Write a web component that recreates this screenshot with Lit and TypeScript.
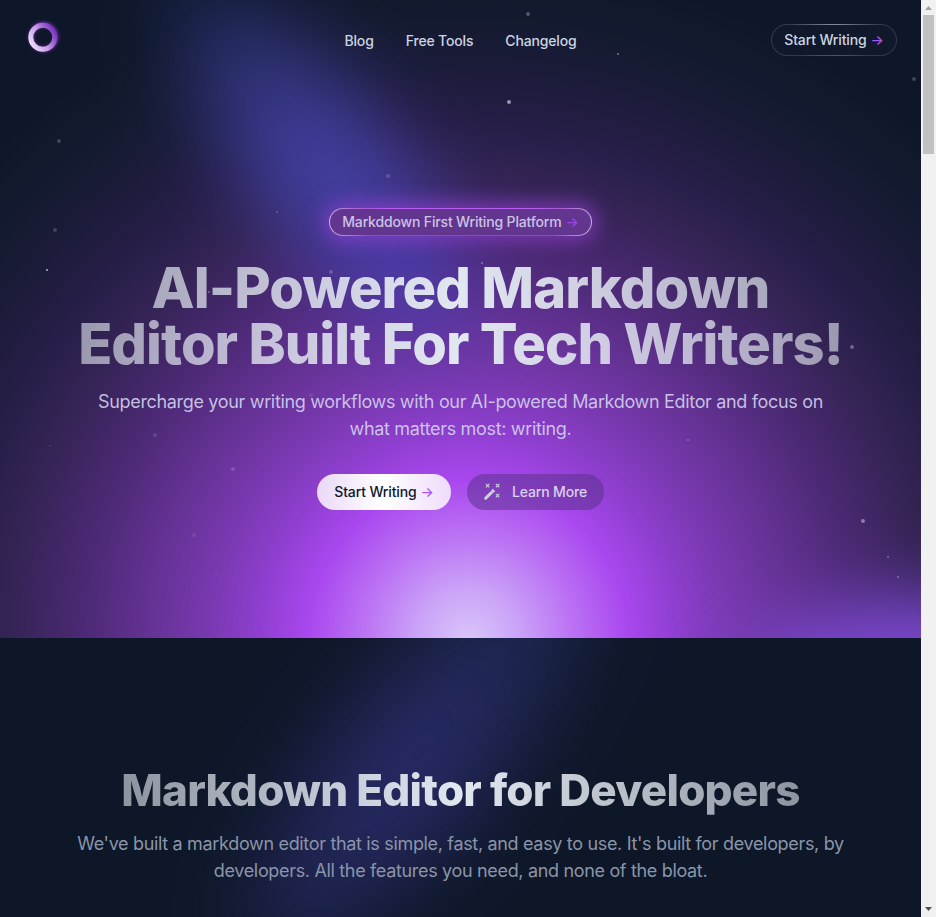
import { LitElement, html, css } from "lit";
import { customElement } from "lit/decorators.js";
import { styleMap } from "lit/directives/style-map.js";

type Star = [x: number, y: number, size: number, alpha: number];

const STARS: Star[] = [
  [528, 13.5, 4, 0.3], [617.5, 53.5, 2, 0.45], [508.5, 102, 4, 0.6], [913.5, 79, 4, 0.22],
  [59, 140.5, 4, 0.22], [388, 176, 4, 0.2], [54.5, 230, 4, 0.2], [47, 270, 2, 0.75],
  [277, 211.5, 2, 0.25], [330.5, 272, 4, 0.22], [482, 263, 2, 0.4], [209, 292, 2, 0.4],
  [310, 310, 2, 0.15], [852, 346.5, 4, 0.35], [155, 434.5, 4, 0.15], [49.5, 446, 2, 0.12],
  [233, 469, 4, 0.18], [688, 440, 2, 0.3], [194, 534.5, 4, 0.12], [215.5, 575, 2, 0.1],
  [862.5, 520.5, 4, 0.45], [887.5, 557, 2, 0.35], [898, 577, 2, 0.35], [311, 395, 4, 0.1],
];

@customElement("app-root")
export class AppRoot extends LitElement {
  static styles = css`
    :host {
      display: flex;
      width: 936px;
      height: 917px;
      overflow: hidden;
      background: #0e1729;
      font-family: Inter, sans-serif;
    }
    .page { width: 921px; height: 917px; overflow: hidden; position: relative; }
    .hero {
      position: relative;
      isolation: isolate;
      height: 638px;
      overflow: hidden;
      text-align: center;
    }
    .sky { position: absolute; inset: 0; z-index: -1; overflow: hidden; }
    .glow {
      position: absolute;
      inset: 0;
      background: radial-gradient(circle 680px at 468px 640px,
        #d9c6fa 0, #cba4f8 50px, #bb72f4 105px, #a947ef 160px, #8f3fd0 208px,
        #7b39b3 255px, #673398 310px, #4c2975 385px, #352456 455px, #251d45 520px, #1a1b38 575px, #131a2f 625px, #0e1729 680px);
    }
    .beam {
      position: absolute;
      left: 95px;
      top: 92px;
      width: 450px;
      height: 140px;
      border-radius: 50%;
      background: linear-gradient(90deg, rgba(50, 62, 150, 0.3), rgba(68, 67, 170, 0.88) 48%, rgba(78, 62, 185, 0.8));
      filter: blur(40px);
      transform: rotate(52deg);
    }
    .corner {
      position: absolute;
      left: 725px;
      top: 602px;
      width: 330px;
      height: 150px;
      border-radius: 50%;
      background: #7e49d4;
      filter: blur(36px);
      transform: rotate(-8deg);
    }
    .star { position: absolute; border-radius: 50%; background: #e2e8f0; transform: translate(-50%, -50%); }
    .bar {
      display: grid;
      grid-template-columns: 1fr auto 1fr;
      align-items: center;
      height: 80px;
      padding: 0 24px;
    }
    .logo { display: block; width: 38px; height: 38px; margin-top: -6px; }
    .links { display: flex; gap: 32px; padding-top: 1px; }
    .link { color: #cbd5e1; font-size: 14px; font-weight: 500; line-height: 21px; letter-spacing: -0.16px; text-decoration: none; }
    .pill {
      display: inline-flex;
      align-items: center;
      justify-content: center;
      box-sizing: border-box;
      border-radius: 999px;
      border: 1px solid transparent;
      padding-bottom: 1px;
      font-size: 14px;
      font-weight: 500;
      line-height: 21px;
      letter-spacing: -0.14px;
      white-space: nowrap;
    }
    .arrow { color: #a855f7; margin-left: 4px; }
    .enter {
      justify-self: end;
      width: 126px;
      height: 32px;
      color: #cbd5e1;
      background:
        linear-gradient(#10192b, #10192b) padding-box,
        radial-gradient(circle 45px at 50% 0, #8390a3, transparent) border-box,
        linear-gradient(#2e3a4d, #2e3a4d) border-box;
    }
    .copy { display: flex; flex-direction: column; align-items: center; padding-top: 128px; }
    .badge {
      width: 263px;
      height: 28px;
      color: #cbc3e6;
      letter-spacing: -0.16px;
      background:
        linear-gradient(#62358f, #62358f) padding-box,
        radial-gradient(ellipse 130px 24px at 50% 0, #b65cee 60%, transparent) border-box,
        linear-gradient(90deg, #d0b0ee, #87519f 15%, #87519f 85%, #d0b0ee) border-box;
      box-shadow: 0 0 20px 5px rgba(152, 66, 215, 0.65);
    }
    .badge .arrow { color: #9a48e6; }
    .title {
      margin: 24px 0 0;
      padding-bottom: 16px;
      font-size: 56px;
      font-weight: 800;
      line-height: 56px;
      letter-spacing: -0.952px;
      color: transparent;
      background: linear-gradient(90deg, rgba(226, 232, 240, 0.6), #e2e8f0 50%, rgba(226, 232, 240, 0.6));
      -webkit-background-clip: text;
      background-clip: text;
      white-space: nowrap;
    }
    .lead { margin: 0; font-size: 18px; line-height: 27px; letter-spacing: -0.33px; color: #cbd5e1; white-space: nowrap; }
    .hero .lead { color: rgba(214, 215, 242, 0.88); }
    .actions { display: flex; gap: 16px; margin-top: 32px; }
    .start {
      width: 134px;
      height: 36px;
      border: 0;
      color: #0f172a;
      background: linear-gradient(90deg, rgba(255, 255, 255, 0.8), #fff 50%, rgba(255, 255, 255, 0.8));
    }
    .more { width: 137px; height: 36px; border: 0; color: #dcd0ee; background: rgba(84, 47, 132, 0.5); }
    .wand { width: 17px; height: 17px; margin-right: 11px; }
    .features {
      position: relative;
      isolation: isolate;
      height: 279px;
      overflow: hidden;
      background: #0e1728;
      text-align: center;
      display: flex;
      flex-direction: column;
      align-items: center;
    }
    .haze {
      position: absolute;
      z-index: -1;
      left: 160px;
      top: 46px;
      width: 510px;
      height: 150px;
      border-radius: 50%;
      background: linear-gradient(90deg, rgba(57, 54, 140, 0.35), rgba(50, 49, 126, 0.7) 48%, rgba(38, 52, 110, 0.5));
      filter: blur(42px);
      transform: rotate(-51deg);
    }
    .subtitle {
      margin: 126px 0 0;
      padding-bottom: 14px;
      font-size: 44px;
      font-weight: 800;
      line-height: 52px;
      letter-spacing: -0.78px;
      color: transparent;
      background: linear-gradient(90deg, rgba(226, 232, 240, 0.6), #e2e8f0 50%, rgba(226, 232, 240, 0.6));
      -webkit-background-clip: text;
      background-clip: text;
      white-space: nowrap;
    }
    .features .lead { color: #8995a8; }
    .track {
      width: 15px;
      height: 917px;
      background: #f1f1f1;
      display: flex;
      flex-direction: column;
      align-items: center;
    }
    .tip { width: 15px; height: 15px; display: block; flex: none; }
    .thumb { width: 11px; height: 139px; background: #c1c1c1; }
    .rest { flex: 1; }
  `;

  private arrow() {
    return html`<span class="arrow">→</span>`;
  }

  render() {
    return html`
      <div class="page">
        <section class="hero">
          <div class="sky">
            <div class="glow"></div>
            <div class="beam"></div>
            <div class="corner"></div>
            ${STARS.map(([x, y, size, alpha]) => html`<i class="star" style=${styleMap({
              left: `${x}px`, top: `${y}px`, width: `${size}px`, height: `${size}px`, opacity: `${alpha}`,
            })}></i>`)}
          </div>
          <header class="bar">
            <svg class="logo" viewBox="0 0 38 38">
              <defs>
                <linearGradient id="ring" x1="0" y1="0.8" x2="1" y2="0.2">
                  <stop offset="0" stop-color="#eadcf6" />
                  <stop offset="0.45" stop-color="#c79be6" />
                  <stop offset="1" stop-color="#7430bb" />
                </linearGradient>
                <filter id="soft" x="-40%" y="-40%" width="180%" height="180%"><feGaussianBlur stdDeviation="1.6" /></filter>
              </defs>
              <circle cx="19.5" cy="19" r="12.4" fill="none" stroke="#8b35d6" stroke-width="5" opacity="0.75" filter="url(#soft)" />
              <circle cx="18.8" cy="19.2" r="12" fill="none" stroke="url(#ring)" stroke-width="5" />
            </svg>
            <nav class="links">
              <a class="link">Blog</a>
              <a class="link">Free Tools</a>
              <a class="link">Changelog</a>
            </nav>
            <a class="pill enter">Start Writing ${this.arrow()}</a>
          </header>
          <div class="copy">
            <div class="pill badge">Markddown First Writing Platform ${this.arrow()}</div>
            <h1 class="title">AI-Powered Markdown<br />Editor Built For Tech Writers!</h1>
            <p class="lead">Supercharge your writing workflows with our AI-powered Markdown Editor and focus on<br />what matters most: writing.</p>
            <div class="actions">
              <a class="pill start">Start Writing ${this.arrow()}</a>
              <a class="pill more">
                <svg class="wand" viewBox="0 0 17 17" fill="none" stroke="#cbd5e1">
                  <path d="M1.7 15.3 7.2 9.8" stroke-width="3" stroke-linecap="round" />
                  <path d="M8.2 8.8 10 7" stroke-width="3.2" />
                  <path d="m1.9 .9 3.4 3.4M5.3 .9 1.9 4.3M11.9 .9l3.4 3.4M15.3 .9 11.9 4.3M11.9 10.9l3.4 3.4M15.3 10.9 11.9 14.3" stroke-width="1.1" />
                </svg>
                Learn More
              </a>
            </div>
          </div>
        </section>
        <section class="features">
          <div class="haze"></div>
          <h2 class="subtitle">Markdown Editor for Developers</h2>
          <p class="lead">We've built a markdown editor that is simple, fast, and easy to use. It's built for developers, by<br />developers. All the features you need, and none of the bloat.</p>
        </section>
      </div>
      <div class="track">
        <svg class="tip" viewBox="0 0 15 15"><path d="M4 10h7L7.5 6z" fill="#a3a3a3" /></svg>
        <div class="thumb"></div>
        <div class="rest"></div>
        <svg class="tip" viewBox="0 0 15 15"><path d="M4 5h7L7.5 9z" fill="#505050" /></svg>
      </div>
    `;
  }
}
